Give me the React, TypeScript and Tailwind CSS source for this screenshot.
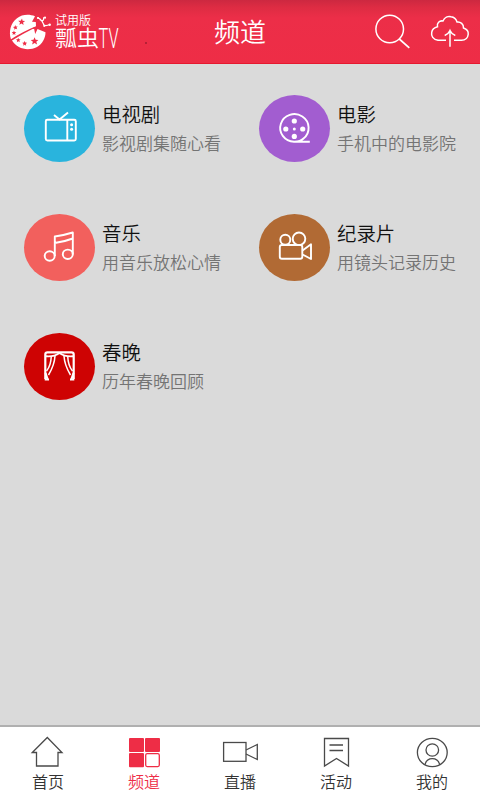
import React from "react";

const FONT = "font-['Noto_Sans_CJK_SC','Noto_Sans',sans-serif]";

function Logo() {
  return (
    <svg className="block h-12 w-[116px]" viewBox="8 8 116 48" role="img" aria-label="瓢虫TV">
      <g fill="#fff">
        <path d="M11 39.300C8.500 32 10.500 23 17 18.200C22 14.400 29 13.700 35 16.300L32 21.800L35.800 22L36 26.300Q22 32 11 39.300Z" />
        <path d="M12 40.600Q23 33.500 34 28.200L35.200 34L37.500 29L45.500 32.300C45.500 38 42.500 44 37 47C28.500 51.300 17.500 49.500 12 40.600Z" />
      </g>
      <g fill="#ee2d46">
        <path d="M30 18.600l.6 2.300 2.500.3-2 1.400.5 2.500-2.100-1.400-2.200 1.300.8-2.400-1.900-1.600 2.500-.1z" transform="translate(-8 -.2)" />
        <path d="M15.200 25l.7 1.500 1.800-.1-1.200 1.300.7 1.600-1.600-.6-1.400 1.100.2-1.800-1.500-.9 1.700-.4z" />
        <path d="M13.900 30.500l.7 1.500 1.700.1-1.300 1.100.5 1.700-1.500-.9-1.400.9.300-1.700-1.200-1.100 1.700-.1z" />
        <path d="M18.200 37.800l.7 1.500 1.700.1-1.300 1.100.5 1.700-1.500-.9-1.500 1 .4-1.800-1.300-1.100 1.700-.2z" />
        <path d="M24.600 41l.8 1.600 1.700.1-1.300 1.200.4 1.800-1.500-.9-1.500.9.300-1.800-1.300-1.200 1.700-.1z" />
        <path d="M34.600 37.200l1 2.600 2.800.1-2.100 1.800.8 2.700-2.500-1.500-2.500 1.500.8-2.700-2.200-1.800 2.800-.1z" />
        <circle cx="33.500" cy="28.200" r=".8" />
      </g>
      <path d="M37.500 17.500Q43 20 44.300 27M39.800 19.500Q44 22.500 43.700 17.300M43.500 24.700Q45.500 26.500 49.800 24.500" fill="none" stroke="#fff" strokeWidth="1.300" />
      <g fill="#fff">
        <circle cx="38" cy="18" r="1.100" />
        <circle cx="45" cy="17.700" r="1.100" />
        <circle cx="49.700" cy="24.700" r="1.200" />
      </g>
      <g fill="#fff" className={FONT}>
        <text x="55" y="25" fontSize="12" fontWeight="350" textLength="36" lengthAdjust="spacingAndGlyphs">试用版</text>
        <text x="55" y="46" fontSize="22" fontWeight="350" textLength="44" lengthAdjust="spacingAndGlyphs">瓢虫</text>
      </g>
      <text x="98.500" y="48" fontSize="27" fontWeight="300" fill="#fff" className="font-['Roboto',sans-serif]" textLength="20" lengthAdjust="spacingAndGlyphs">TV</text>
    </svg>
  );
}

function SearchIcon() {
  return (
    <svg className="h-9 w-9" viewBox="375 14 36 36" fill="none" stroke="#fff" strokeWidth="1.500">
      <circle cx="389.700" cy="29" r="13.800" />
      <path d="M399.300 39L409.300 47.800" strokeWidth="1.700" />
    </svg>
  );
}

function UploadIcon() {
  return (
    <svg className="h-9 w-10" viewBox="430 14 40 36" fill="none" stroke="#fff" strokeWidth="1.500">
      <path d="M446 40.300H438C433 39.500 431 36 431.700 32.300C432.200 29 434.500 27.500 437.500 26.800C436.500 23 439.500 20.300 443 21C444.500 17.500 448 16 451 16.800C454 17.200 456.200 19.300 457 22C460.500 21.500 463.800 24 463.500 28C466.500 29 468.600 31.500 468.200 34.500C467.700 38.200 465 40.300 461.500 40.300H454" />
      <path d="M450 46.800V31M444.700 35.500Q448.500 34 450 30.500Q451.500 34 455.300 35.500" />
    </svg>
  );
}

const tv = (
  <>
    <rect x="45.800" y="119.800" width="30" height="20.700" rx="1.500" />
    <path d="M67.300 120V140.500M54 115L59.500 119.500L68 112.500" />
    <g fill="#fff" stroke="none">
      <circle cx="71.600" cy="124.700" r="1.500" />
      <circle cx="71.600" cy="129.300" r="1.500" />
    </g>
  </>
);

const reel = (
  <>
    <path d="M74.800 141.700H59A14.200 13.800 0 1 1 68.500 138.500C66.500 140.500 64 141.700 59.500 141.700" />
    <g fill="#fff" stroke="none">
      <circle cx="59.300" cy="121" r="2.600" />
      <circle cx="50.800" cy="129" r="2.600" />
      <circle cx="67.700" cy="129" r="2.600" />
      <circle cx="59.300" cy="136.400" r="2.600" />
      <circle cx="59.300" cy="129" r="1.500" />
    </g>
  </>
);

const music = (
  <>
    <ellipse cx="49.700" cy="137" rx="5" ry="4.700" />
    <ellipse cx="67.800" cy="135.300" rx="5" ry="4.700" />
    <path d="M54.800 137V117.500Q63 116.500 72.800 113.500V135.300M54.800 124Q65 122.500 72.800 119.500" />
  </>
);

const film = (
  <>
    <circle cx="50.300" cy="120.700" r="5" />
    <circle cx="64" cy="119.800" r="6.300" />
    <rect x="44.800" y="126" width="22.500" height="13.800" rx="2" />
    <path d="M67.500 131.500L76 125.300V140L67.500 135.500" />
  </>
);

const curtain = (
  <>
    <path d="M45.300 141V116.500Q45.300 114.300 47.500 114.300H71.500Q73.700 114.300 73.700 116.500V141" strokeWidth="2.200" />
    <path d="M46 118.300Q54 119 59.500 115Q65 119 73 118.300" />
    <path d="M55 118C54.500 127 51.500 132 48.500 137M51.300 118C51 126 49 130 46.500 133M64 118C64.500 127 67.500 132 70.500 137M67.700 118C68 126 70 130 72.500 133" strokeWidth="1.500" />
    <path d="M45.500 135L47.500 141M73.500 135L71.500 141" strokeWidth="2.200" />
    <path d="M44.700 141.500H49M70 141.500H74.300" strokeWidth="2.200" />
  </>
);

const channels = [
  { title: "电视剧", desc: "影视剧集随心看", color: "bg-[#29b4dd]", icon: tv },
  { title: "电影", desc: "手机中的电影院", color: "bg-[#a25dd0]", icon: reel },
  { title: "音乐", desc: "用音乐放松心情", color: "bg-[#f2605d]", icon: music },
  { title: "纪录片", desc: "用镜头记录历史", color: "bg-[#b16a34]", icon: film },
  { title: "春晚", desc: "历年春晚回顾", color: "bg-[#ce0303]", icon: curtain },
];

const tabs = [
  {
    label: "首页",
    icon: <path d="M32.300 752.500L47.300 737.500L62 752.500H58V766H36.500V752.500Z" />,
  },
  {
    label: "频道",
    active: true,
    icon: (
      <g transform="translate(-96 0)">
        <g fill="#ee2d46" stroke="none">
          <rect x="129" y="738" width="15" height="14" rx="1" />
          <rect x="145" y="738" width="15" height="14" rx="1" />
          <rect x="129" y="753" width="15" height="14.300" rx="1" />
        </g>
        <rect x="145.700" y="753.700" width="13.600" height="12.900" rx="1.500" stroke="#ee2d46" />
      </g>
    ),
  },
  {
    label: "直播",
    icon: (
      <g transform="translate(-192 0)">
        <rect x="223.600" y="742.500" width="22.400" height="18.800" />
        <path d="M246 750L257.300 744.500V759.500L246 754" />
      </g>
    ),
  },
  {
    label: "活动",
    icon: (
      <g transform="translate(-288 0)">
        <path d="M324.500 738.500H348.500V766L336.500 758.500L324.500 766ZM329.500 745H343M329.500 750.500H343" />
      </g>
    ),
  },
  {
    label: "我的",
    icon: (
      <g transform="translate(-384 0)">
        <ellipse cx="432.300" cy="752.500" rx="14.900" ry="14.200" />
        <ellipse cx="432.300" cy="750" rx="6.300" ry="6.200" />
        <path d="M425 764.700Q426.500 758.700 432.300 758.700T439.700 764.700" />
      </g>
    ),
  },
];

export default function App() {
  return (
    <div className={`flex h-[800px] w-[480px] flex-col overflow-hidden bg-[#dadada] font-[350] ${FONT}`}>
      <header className="grid h-16 shrink-0 grid-cols-[1fr_auto_1fr] items-center border-b border-[#e5192f] bg-[linear-gradient(#cc2840_0px,#dd2c43_7px,#ec2e48_18px,#ee2d46_100%)]">
        <div className="flex items-center pl-2">
          <Logo />
          <span className="ml-[21px] mt-[22px] h-[2px] w-[2px] rounded-full bg-[#a51c30]" />
        </div>
        <h1 className="-mt-0.5 text-[26px] font-[350] leading-[38px] text-white">频道</h1>
        <div className="flex items-center justify-end gap-[19px] pr-[10px]">
          <SearchIcon />
          <UploadIcon />
        </div>
      </header>

      <main className="flex-1 pl-6 pt-[31px]">
        <div className="grid auto-rows-[119px] grid-cols-[235px_1fr]">
          {channels.map((c) => (
            <div key={c.title} className="flex items-start">
              <div className={`h-[67px] w-[71px] shrink-0 rounded-[50%] ${c.color}`}>
                <svg className="h-[67px] w-[71px]" viewBox="24 95 71 67" fill="none" stroke="#fff" strokeWidth="1.900" strokeLinejoin="round">
                  {c.icon}
                </svg>
              </div>
              <div className="ml-[7px] pt-[5px]">
                <div className="text-[19.400px] leading-7 text-[#111111]">{c.title}</div>
                <div className="mt-px text-[17px] leading-7 text-[#747474]">{c.desc}</div>
              </div>
            </div>
          ))}
        </div>
      </main>

      <nav className="grid h-[75px] shrink-0 grid-cols-5 border-t-2 border-[#b0b0b0] bg-white">
        {tabs.map((t) => (
          <div key={t.label} className={`flex flex-col items-center ${t.active ? "text-[#ee2d46]" : "text-[#333333]"}`}>
            <svg className="h-[42px] w-24 shrink-0" viewBox="0 727 96 42" fill="none" stroke="#4a4a4a" strokeWidth="1.300">
              {t.icon}
            </svg>
            <span className="text-base leading-6">{t.label}</span>
          </div>
        ))}
      </nav>
    </div>
  );
}
